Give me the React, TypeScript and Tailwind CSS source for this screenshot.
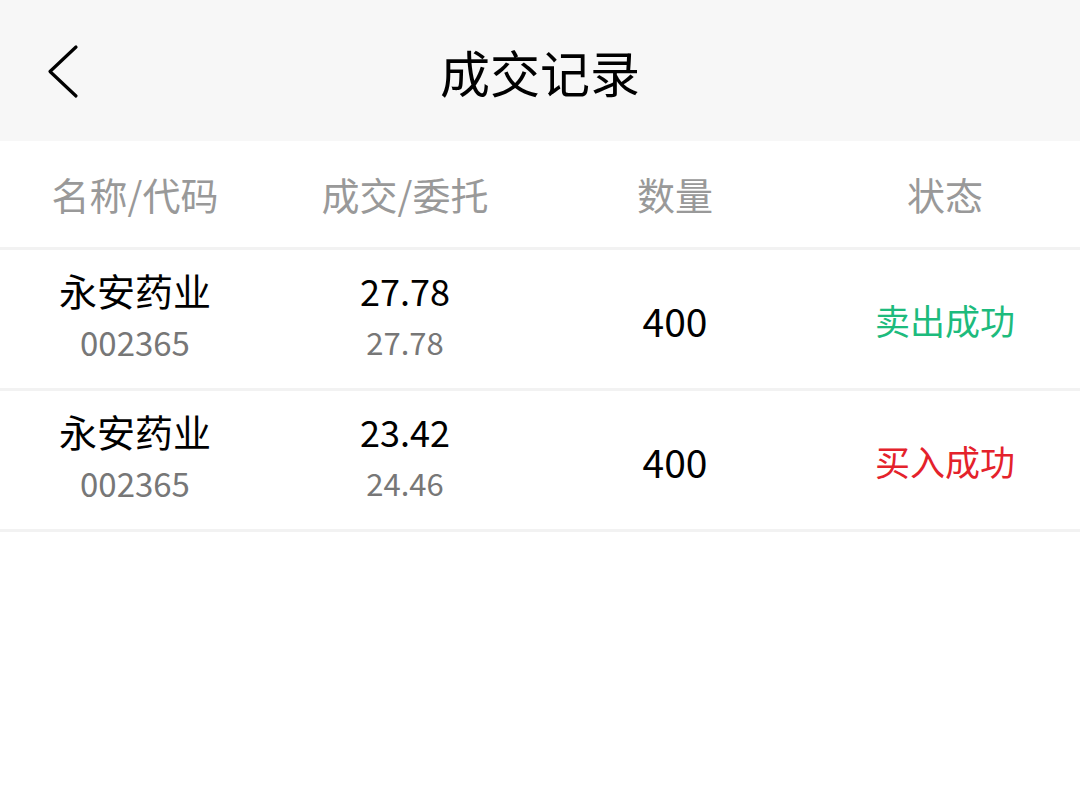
const font = { fontFamily: '"Noto Sans CJK SC", "Noto Sans", sans-serif' };

const trades = [
  { name: '永安药业', code: '002365', deal: '27.78', order: '27.78', qty: '400', status: '卖出成功', side: 'sell' },
  { name: '永安药业', code: '002365', deal: '23.42', order: '24.46', qty: '400', status: '买入成功', side: 'buy' },
] as const;

function BackIcon() {
  return (
    <svg width="34" height="56" viewBox="0 0 34 56" fill="none">
      <path d="M30 3 L4 27.5 L30 52" stroke="#000" strokeWidth="3.2" strokeLinecap="round" strokeLinejoin="round" />
    </svg>
  );
}

export default function App() {
  return (
    <div className="min-h-[803px] w-full bg-white" style={font}>
      <header className="flex h-[141px] items-center bg-[#f7f7f7]">
        <div className="flex w-[120px] items-center pl-[46px] pt-[2px]">
          <BackIcon />
        </div>
        <h1 className="flex-1 text-center text-[50px] leading-none text-black">成交记录</h1>
        <div className="w-[120px]" />
      </header>

      <div className="grid h-[109px] grid-cols-4 items-center border-b-[3px] border-[#f2f2f2] pb-[2px] text-center text-[38px] text-[#999999]">
        <div>名称/代码</div>
        <div>成交/委托</div>
        <div>数量</div>
        <div>状态</div>
      </div>

      {trades.map((t, i) => (
        <div key={i} className="grid h-[141px] grid-cols-4 items-center border-b-[3px] border-[#f2f2f2] text-center">
          <div className="flex flex-col items-center gap-[10px] pb-[8px]">
            <div className="text-[38px] leading-[44px] text-black">{t.name}</div>
            <div className="text-[33px] leading-[40px] text-[#777777]">{t.code}</div>
          </div>
          <div className="flex flex-col items-center gap-[10px] pb-[8px]">
            <div className="text-[36px] leading-[44px] text-black">{t.deal}</div>
            <div className="text-[31px] leading-[40px] text-[#777777]">{t.order}</div>
          </div>
          <div className="pt-[2px] text-[39px] text-black">{t.qty}</div>
          <div className={`pt-[2px] text-[35px] ${t.side === 'sell' ? 'text-[#1dbb7d]' : 'text-[#e4222b]'}`}>
            {t.status}
          </div>
        </div>
      ))}
    </div>
  );
}
